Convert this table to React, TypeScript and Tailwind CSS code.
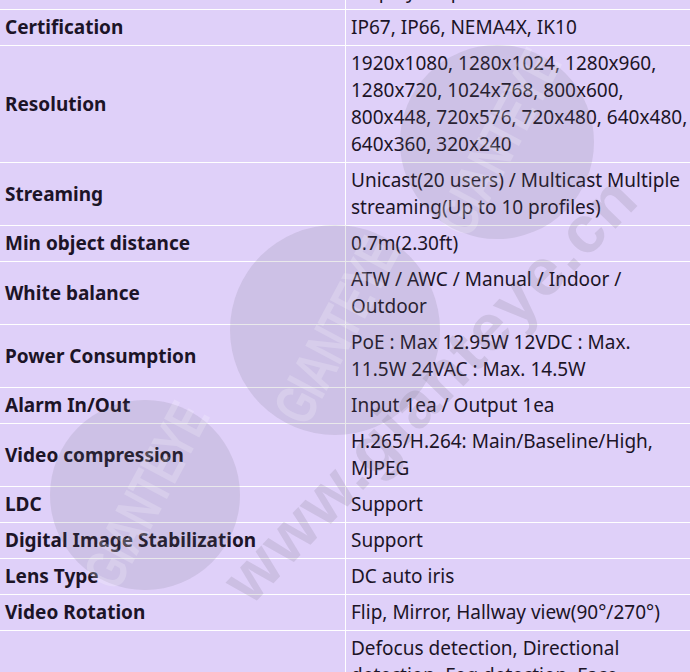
const specs: [string, string][] = [
  ['Video Out', 'CVBS: 1.0 Vp-p / 75Ω composite, Display output'],
  ['Certification', 'IP67, IP66, NEMA4X, IK10'],
  ['Resolution', '1920x1080, 1280x1024, 1280x960, 1280x720, 1024x768, 800x600, 800x448, 720x576, 720x480, 640x480, 640x360, 320x240'],
  ['Streaming', 'Unicast(20 users) / Multicast Multiple streaming(Up to 10 profiles)'],
  ['Min object distance', '0.7m(2.30ft)'],
  ['White balance', 'ATW / AWC / Manual / Indoor / Outdoor'],
  ['Power Consumption', 'PoE : Max 12.95W 12VDC : Max. 11.5W 24VAC : Max. 14.5W'],
  ['Alarm In/Out', 'Input 1ea / Output 1ea'],
  ['Video compression', 'H.265/H.264: Main/Baseline/High, MJPEG'],
  ['LDC', 'Support'],
  ['Digital Image Stabilization', 'Support'],
  ['Lens Type', 'DC auto iris'],
  ['Video Rotation', 'Flip, Mirror, Hallway view(90°/270°)'],
  ['Video Analytics', 'Defocus detection, Directional detection, Fog detection, Face detection, Motion detection, Tampering, Virtual line, Enter/Exit, Appear/Disappear, Audio detection'],
];

function Stamp({ className }: { className: string }) {
  return (
    <div className={`absolute rounded-full bg-[rgba(110,105,120,0.15)] flex items-center justify-center ${className}`}>
      <span className="-rotate-[62deg] text-[58px] font-bold tracking-tight text-[rgba(255,255,255,0.2)] [font-family:'Liberation_Sans_Narrow','Liberation_Sans',sans-serif] scale-x-[0.7]">
        GIANTEYE
      </span>
    </div>
  );
}

export default function App() {
  return (
    <div className="relative h-[672px] w-[690px] overflow-hidden bg-[#dfd0f9] text-[19px] leading-[27px] text-[#1c1427] [font-family:'Noto_Sans',sans-serif]">
      <div className="-mt-[53px]">
        {specs.map(([label, value]) => (
          <div key={label} className="flex border-b border-white">
            <div className="flex w-[346px] shrink-0 items-center border-r border-white px-[5px] py-1 font-bold">
              {label}
            </div>
            <div className="flex-1 py-1 pl-[5px] pr-[1px]">{value}</div>
          </div>
        ))}
      </div>

      {/* watermark */}
      <div className="pointer-events-none absolute inset-0">
        <Stamp className="left-[400px] top-[45px] h-[194px] w-[194px]" />
        <Stamp className="left-[230px] top-[225px] h-[210px] w-[210px]" />
        <Stamp className="left-[50px] top-[400px] h-[190px] w-[190px]" />
        <div className="absolute left-[140px] top-[375px] w-[580px] origin-center -rotate-[46deg] text-center text-[66px] font-bold tracking-[2px] text-[rgba(110,105,120,0.17)] [font-family:'Liberation_Sans',sans-serif]">
          www.gianteye.cn
        </div>
      </div>
    </div>
  );
}
